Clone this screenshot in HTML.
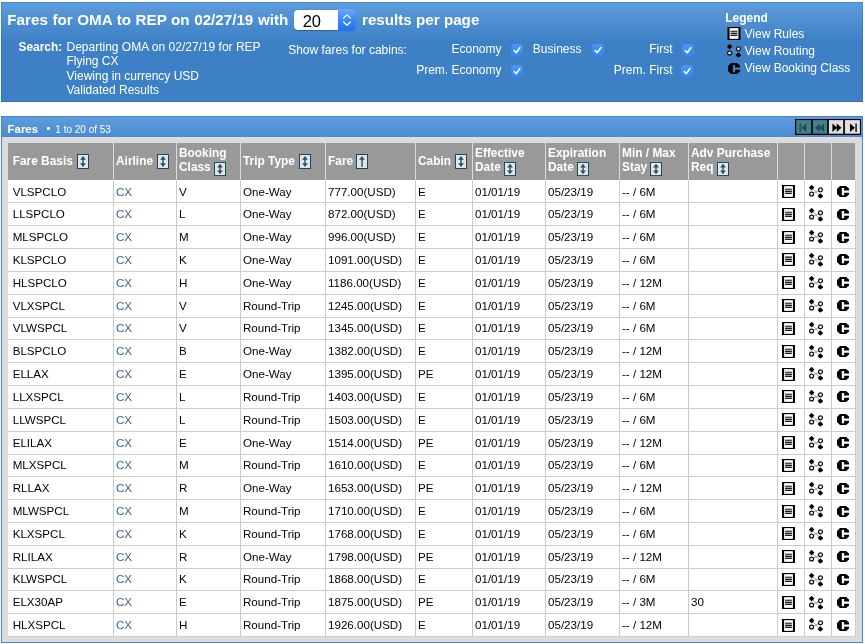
<!DOCTYPE html>
<html><head><meta charset="utf-8"><title>Fares</title>
<style>
html,body{margin:0;padding:0;background:#fff;}
body{width:865px;height:644px;position:relative;overflow:hidden;font-family:"Liberation Sans",sans-serif;color:#000;}
.abs{position:absolute;white-space:nowrap;}
#p1{position:absolute;left:1px;top:2px;width:860px;height:98px;border:1px solid rgba(0,60,150,0.2);background:#3d80c5 linear-gradient(#5e9ddd 0,#3d80c5 40px);background-origin:border-box;}
#p2{position:absolute;left:1px;top:116px;width:860px;height:524.6px;border:1px solid #4585cb;background:#dcdcdc;}
#p2h{position:absolute;left:0;top:0;width:860px;height:20px;background:linear-gradient(#5e9ddd 0,#4a8bd1 100%);}
.w{color:#fff;}
.t15{font-size:15.2px;font-weight:bold;line-height:18px;}
.t12{font-size:12px;line-height:14.3px;}
.b12{font-size:11.7px;font-weight:bold;line-height:14.3px;}
#sel{position:absolute;left:294px;top:10px;width:61px;height:20px;border-radius:4px;background:#fff;box-shadow:0 0.5px 1px rgba(0,0,0,.3);}
#sel .arr{position:absolute;left:44px;top:-1px;width:18px;height:22px;border-radius:0 4.5px 4.5px 0;background:linear-gradient(#6aa9fb,#3e8bf7 45%,#1f6ff2);overflow:hidden;}
#sel .v{position:absolute;left:8.7px;top:1.5px;font-size:16.5px;line-height:19px;color:#000;}
.cb{position:absolute;width:12px;height:12px;border-radius:3.5px;background:linear-gradient(#4896f9,#3383f5);}
.cb svg{position:absolute;left:0;top:0;width:12px;height:12px;}
.lab{position:absolute;text-align:right;white-space:nowrap;font-size:12px;line-height:14px;color:#fff;}
#grid{position:absolute;left:0;top:0;}
.hc{position:absolute;top:143px;height:37px;background:#999;box-sizing:border-box;}
.ht{position:absolute;color:#fff;font-weight:bold;font-size:11.9px;line-height:14.3px;white-space:nowrap;}
.ht.one{top:10.6px;}
.ht.two{top:3px;}
.si{width:12px;height:15px;vertical-align:-4px;margin-left:1px;}
.si.su{margin-left:0;}
.two .si{height:14px;vertical-align:-4.6px;margin-left:0;}
.row{position:absolute;left:8px;width:848px;background:#ccc;}
.c{position:absolute;top:0;bottom:1px;background:#fff;box-sizing:border-box;font-size:11.6px;line-height:14px;padding-top:5px;white-space:nowrap;}
.lk{color:#336699;}
.ic svg{position:absolute;overflow:visible;}
.i-rules{left:4px;top:5px;width:13px;height:13px;}
.i-route{left:4px;top:4.7px;width:14px;height:13.5px;}
.i-bkc{left:5px;top:6px;width:12px;height:11px;}
#wrap{position:absolute;left:0;top:0;width:865px;height:644px;will-change:transform;}
</style></head><body><div id="wrap">
<svg width="0" height="0" style="position:absolute">
<defs>
<symbol id="sortb" viewBox="0 0 12 15" preserveAspectRatio="none"><rect x="0.5" y="0.5" width="11" height="14" fill="#e3e3ee" stroke="#1c4a54" stroke-width="1"/><path d="M6 2L8.9 5.8H6.7V9.2H8.9L6 13L3.1 9.2H5.3V5.8H3.1Z" fill="#22545d"/></symbol>
<symbol id="sortu" viewBox="0 0 12 15" preserveAspectRatio="none"><rect x="0.5" y="0.5" width="11" height="14" fill="#e3e3ee" stroke="#1c4a54" stroke-width="1"/><path d="M6 2L8.9 5.8H6.8V12.9H5.3V5.8H3.1Z" fill="#2a5962"/></symbol>
<symbol id="rules" viewBox="0 0 13 13"><rect x="0" y="0" width="13" height="13" fill="#000"/><rect x="2.1" y="1.15" width="8.8" height="10.7" fill="#fff"/><rect x="3.1" y="3.5" width="6.8" height="5.6" fill="#d4d4d4"/><path d="M3.1 4.2h6.8M3.1 6.3h6.8M3.1 8.4h6.8" stroke="#1a1a1a" stroke-width="1.15"/></symbol>
<symbol id="route" viewBox="0 0 14 13.5"><path d="M2.5 2.5L11.5 11.2M11.5 4.8L2.5 9" stroke="#888" stroke-width="0.8" fill="none"/><path d="M2.6 -0.2L5.4 2.6L2.6 5.4L-0.2 2.6Z" fill="#000"/><path d="M11.4 8.3L14.2 11.1L11.4 13.9L8.6 11.1Z" fill="#000"/><circle cx="11.5" cy="4.8" r="1.95" fill="#fff" stroke="#111" stroke-width="1.25"/><circle cx="2.6" cy="9" r="1.95" fill="#fff" stroke="#111" stroke-width="1.25"/></symbol>
<symbol id="bkc" viewBox="0 0 12 11"><path d="M3,0 L9,0 L12,2.5 L12,4.6 L7.1,4.6 L7.1,2 L4.8,2 L4.8,9.2 L7.1,9.2 L7.1,6.7 L12,6.7 L12,8.5 L9,11 L3,11 L0,8 L0,3 Z" fill="#000"/></symbol>
<symbol id="chk" viewBox="0 0 12 12"><path d="M3.2 6.5L5.2 8.7L8.8 3.7" stroke="#fff" stroke-width="1.6" fill="none" stroke-linecap="round" stroke-linejoin="round"/></symbol>
</defs></svg>

<div id="p1"></div>
<div class="abs w t15" style="left:7.3px;top:11px;word-spacing:0.35px">Fares for OMA to REP on 02/27/19 with</div>
<div id="sel"><div class="v">20</div><div class="arr"><svg width="18" height="21" viewBox="0 0 18 21" style="position:absolute;left:0;top:1px"><path d="M5.6 8.1L9 4.9L12.4 8.1M5.6 12L9 15.2L12.4 12" stroke="#fff" stroke-width="1.3" fill="none" stroke-linecap="round" stroke-linejoin="round"/></svg></div></div>
<div class="abs w t15" style="left:362px;top:11px;">results per page</div>

<div class="abs w b12" style="left:18.5px;top:40px;font-size:11.9px">Search:</div>
<div class="abs w t12" style="left:66.5px;top:40px;">Departing OMA on 02/27/19 for REP<br>Flying CX<br>Viewing in currency USD<br>Validated Results</div>
<div class="abs w t12" style="left:288.2px;top:43px;">Show fares for cabins:</div>

<div class="lab" style="right:363.5px;top:42px;">Economy</div>
<div class="lab" style="right:363.5px;top:63px;">Prem. Economy</div>
<div class="lab" style="right:283.5px;top:42px;">Business</div>
<div class="lab" style="right:192.5px;top:42px;">First</div>
<div class="lab" style="right:192.5px;top:63px;">Prem. First</div>
<div class="cb" style="left:511px;top:44px;"><svg><use href="#chk"/></svg></div>
<div class="cb" style="left:511px;top:65px;"><svg><use href="#chk"/></svg></div>
<div class="cb" style="left:591.5px;top:44px;"><svg><use href="#chk"/></svg></div>
<div class="cb" style="left:682px;top:44px;"><svg><use href="#chk"/></svg></div>
<div class="cb" style="left:681px;top:65px;"><svg><use href="#chk"/></svg></div>

<div class="abs w b12" style="left:725.2px;top:11px;font-size:12px">Legend</div>
<svg class="abs" style="left:727px;top:27px;width:14px;height:13px"><use href="#rules"/></svg>
<svg class="abs" style="left:727px;top:44.2px;width:14px;height:13.5px;overflow:visible"><use href="#route"/></svg>
<svg class="abs" style="left:728px;top:63px;width:12px;height:11px"><use href="#bkc"/></svg>
<div class="abs w t12" style="left:744.5px;top:27px;">View Rules</div>
<div class="abs w t12" style="left:744.5px;top:44px;">View Routing</div>
<div class="abs w t12" style="left:744.5px;top:61px;">View Booking Class</div>

<div id="p2"><div id="p2h"></div></div>
<div class="abs w" style="left:7.6px;top:122px;font-size:11.4px;font-weight:bold;line-height:14px;">Fares</div>
<div class="abs" style="left:47px;top:127px;width:2.5px;height:2.5px;background:#fff;border-radius:1px;"></div>
<div class="abs w" style="left:55.3px;top:124px;font-size:10px;line-height:12px;">1 to 20 of 53</div>
<div class="abs" style="left:795px;top:119px;width:66px;height:16px;background:#000;"></div>
<svg class="abs" style="left:795px;top:119px;width:66px;height:16px" viewBox="0 0 66 16">
<rect x="1.2" y="1.1" width="15" height="13.6" fill="#47808c"/>
<rect x="17.8" y="1.1" width="14.4" height="13.6" fill="#47808c"/>
<rect x="33.9" y="1.1" width="14.3" height="13.6" fill="#e0e0e0"/>
<rect x="49.9" y="1.1" width="15" height="13.6" fill="#e0e0e0"/>
<path d="M4.5 4.5h1.6v8.5H4.5zM11.4 4.5v8.5L6.5 8.75z" fill="#1f4a52"/>
<path d="M24.7 4.5v8.5L20 8.75zM29.1 4.5v8.5L24.3 8.75z" fill="#1f4a52"/>
<path d="M37.4 4.5v8.5L42.1 8.75zM41.7 4.5v8.5L46.5 8.75z" fill="#000"/>
<path d="M55 4.5v8.5L59.9 8.75z" fill="#000"/><path d="M60.3 4.5h1.6v8.5h-1.6z" fill="#222"/>
</svg>

<div id="grid">
<div class="hc" style="left:8px;width:105px;padding-left:4.7px"><div class="ht one">Fare Basis <svg class="si"><use href="#sortb"/></svg></div></div>
<div class="hc" style="left:114px;width:62px;padding-left:2.0px"><div class="ht one">Airline <svg class="si"><use href="#sortb"/></svg></div></div>
<div class="hc" style="left:177px;width:63px;padding-left:2.0px"><div class="ht two">Booking<br>Class <svg class="si"><use href="#sortb"/></svg></div></div>
<div class="hc" style="left:241px;width:84px;padding-left:2.0px"><div class="ht one">Trip Type <svg class="si"><use href="#sortb"/></svg></div></div>
<div class="hc" style="left:326px;width:89px;padding-left:2.0px"><div class="ht one">Fare <svg class="si su"><use href="#sortu"/></svg></div></div>
<div class="hc" style="left:416px;width:56px;padding-left:2.0px"><div class="ht one">Cabin <svg class="si"><use href="#sortb"/></svg></div></div>
<div class="hc" style="left:473px;width:72px;padding-left:2.0px"><div class="ht two">Effective<br>Date <svg class="si"><use href="#sortb"/></svg></div></div>
<div class="hc" style="left:546px;width:73px;padding-left:2.0px"><div class="ht two">Expiration<br>Date <svg class="si"><use href="#sortb"/></svg></div></div>
<div class="hc" style="left:620px;width:68px;padding-left:2.0px"><div class="ht two">Min / Max<br>Stay <svg class="si"><use href="#sortb"/></svg></div></div>
<div class="hc" style="left:689px;width:88px;padding-left:2.0px"><div class="ht two">Adv Purchase<br>Req <svg class="si"><use href="#sortb"/></svg></div></div>
<div class="hc" style="left:778px;width:26px;padding-left:2.0px"></div>
<div class="hc" style="left:805px;width:26px;padding-left:2.0px"></div>
<div class="hc" style="left:832px;width:23px;padding-left:2.0px"></div>
<div class="row" style="top:180px;height:23px">
<div class="c" style="left:0px;width:105px;padding-left:4.7px;padding-top:5px">VLSPCLO</div>
<div class="c" style="left:106px;width:62px;padding-left:2.0px;padding-top:5px"><span class="lk">CX</span></div>
<div class="c" style="left:169px;width:63px;padding-left:2.0px;padding-top:5px">V</div>
<div class="c" style="left:233px;width:84px;padding-left:2.0px;padding-top:5px">One-Way</div>
<div class="c" style="left:318px;width:89px;padding-left:2.0px;padding-top:5px">777.00(USD)</div>
<div class="c" style="left:408px;width:56px;padding-left:2.0px;padding-top:5px">E</div>
<div class="c" style="left:465px;width:72px;padding-left:2.0px;padding-top:5px">01/01/19</div>
<div class="c" style="left:538px;width:73px;padding-left:2.0px;padding-top:5px">05/23/19</div>
<div class="c" style="left:612px;width:68px;padding-left:2.0px;padding-top:5px">-- / 6M</div>
<div class="c" style="left:681px;width:88px;padding-left:2.0px;padding-top:5px"></div>
<div class="c ic" style="left:770px;width:26px"><svg class="i-rules" style="top:5.00px"><use href="#rules"/></svg></div>
<div class="c ic" style="left:797px;width:26px"><svg class="i-route" style="top:4.80px"><use href="#route"/></svg></div>
<div class="c ic" style="left:824px;width:23px"><svg class="i-bkc" style="top:6.00px"><use href="#bkc"/></svg></div>
</div>
<div class="row" style="top:203px;height:23px">
<div class="c" style="left:0px;width:105px;padding-left:4.7px;padding-top:4px">LLSPCLO</div>
<div class="c" style="left:106px;width:62px;padding-left:2.0px;padding-top:4px"><span class="lk">CX</span></div>
<div class="c" style="left:169px;width:63px;padding-left:2.0px;padding-top:4px">L</div>
<div class="c" style="left:233px;width:84px;padding-left:2.0px;padding-top:4px">One-Way</div>
<div class="c" style="left:318px;width:89px;padding-left:2.0px;padding-top:4px">872.00(USD)</div>
<div class="c" style="left:408px;width:56px;padding-left:2.0px;padding-top:4px">E</div>
<div class="c" style="left:465px;width:72px;padding-left:2.0px;padding-top:4px">01/01/19</div>
<div class="c" style="left:538px;width:73px;padding-left:2.0px;padding-top:4px">05/23/19</div>
<div class="c" style="left:612px;width:68px;padding-left:2.0px;padding-top:4px">-- / 6M</div>
<div class="c" style="left:681px;width:88px;padding-left:2.0px;padding-top:4px"></div>
<div class="c ic" style="left:770px;width:26px"><svg class="i-rules" style="top:4.82px"><use href="#rules"/></svg></div>
<div class="c ic" style="left:797px;width:26px"><svg class="i-route" style="top:4.62px"><use href="#route"/></svg></div>
<div class="c ic" style="left:824px;width:23px"><svg class="i-bkc" style="top:5.82px"><use href="#bkc"/></svg></div>
</div>
<div class="row" style="top:226px;height:23px">
<div class="c" style="left:0px;width:105px;padding-left:4.7px;padding-top:4px">MLSPCLO</div>
<div class="c" style="left:106px;width:62px;padding-left:2.0px;padding-top:4px"><span class="lk">CX</span></div>
<div class="c" style="left:169px;width:63px;padding-left:2.0px;padding-top:4px">M</div>
<div class="c" style="left:233px;width:84px;padding-left:2.0px;padding-top:4px">One-Way</div>
<div class="c" style="left:318px;width:89px;padding-left:2.0px;padding-top:4px">996.00(USD)</div>
<div class="c" style="left:408px;width:56px;padding-left:2.0px;padding-top:4px">E</div>
<div class="c" style="left:465px;width:72px;padding-left:2.0px;padding-top:4px">01/01/19</div>
<div class="c" style="left:538px;width:73px;padding-left:2.0px;padding-top:4px">05/23/19</div>
<div class="c" style="left:612px;width:68px;padding-left:2.0px;padding-top:4px">-- / 6M</div>
<div class="c" style="left:681px;width:88px;padding-left:2.0px;padding-top:4px"></div>
<div class="c ic" style="left:770px;width:26px"><svg class="i-rules" style="top:4.65px"><use href="#rules"/></svg></div>
<div class="c ic" style="left:797px;width:26px"><svg class="i-route" style="top:4.45px"><use href="#route"/></svg></div>
<div class="c ic" style="left:824px;width:23px"><svg class="i-bkc" style="top:5.65px"><use href="#bkc"/></svg></div>
</div>
<div class="row" style="top:249px;height:23px">
<div class="c" style="left:0px;width:105px;padding-left:4.7px;padding-top:4px">KLSPCLO</div>
<div class="c" style="left:106px;width:62px;padding-left:2.0px;padding-top:4px"><span class="lk">CX</span></div>
<div class="c" style="left:169px;width:63px;padding-left:2.0px;padding-top:4px">K</div>
<div class="c" style="left:233px;width:84px;padding-left:2.0px;padding-top:4px">One-Way</div>
<div class="c" style="left:318px;width:89px;padding-left:2.0px;padding-top:4px">1091.00(USD)</div>
<div class="c" style="left:408px;width:56px;padding-left:2.0px;padding-top:4px">E</div>
<div class="c" style="left:465px;width:72px;padding-left:2.0px;padding-top:4px">01/01/19</div>
<div class="c" style="left:538px;width:73px;padding-left:2.0px;padding-top:4px">05/23/19</div>
<div class="c" style="left:612px;width:68px;padding-left:2.0px;padding-top:4px">-- / 6M</div>
<div class="c" style="left:681px;width:88px;padding-left:2.0px;padding-top:4px"></div>
<div class="c ic" style="left:770px;width:26px"><svg class="i-rules" style="top:4.47px"><use href="#rules"/></svg></div>
<div class="c ic" style="left:797px;width:26px"><svg class="i-route" style="top:4.27px"><use href="#route"/></svg></div>
<div class="c ic" style="left:824px;width:23px"><svg class="i-bkc" style="top:5.47px"><use href="#bkc"/></svg></div>
</div>
<div class="row" style="top:272px;height:23px">
<div class="c" style="left:0px;width:105px;padding-left:4.7px;padding-top:4px">HLSPCLO</div>
<div class="c" style="left:106px;width:62px;padding-left:2.0px;padding-top:4px"><span class="lk">CX</span></div>
<div class="c" style="left:169px;width:63px;padding-left:2.0px;padding-top:4px">H</div>
<div class="c" style="left:233px;width:84px;padding-left:2.0px;padding-top:4px">One-Way</div>
<div class="c" style="left:318px;width:89px;padding-left:2.0px;padding-top:4px">1186.00(USD)</div>
<div class="c" style="left:408px;width:56px;padding-left:2.0px;padding-top:4px">E</div>
<div class="c" style="left:465px;width:72px;padding-left:2.0px;padding-top:4px">01/01/19</div>
<div class="c" style="left:538px;width:73px;padding-left:2.0px;padding-top:4px">05/23/19</div>
<div class="c" style="left:612px;width:68px;padding-left:2.0px;padding-top:4px">-- / 12M</div>
<div class="c" style="left:681px;width:88px;padding-left:2.0px;padding-top:4px"></div>
<div class="c ic" style="left:770px;width:26px"><svg class="i-rules" style="top:4.30px"><use href="#rules"/></svg></div>
<div class="c ic" style="left:797px;width:26px"><svg class="i-route" style="top:4.10px"><use href="#route"/></svg></div>
<div class="c ic" style="left:824px;width:23px"><svg class="i-bkc" style="top:5.30px"><use href="#bkc"/></svg></div>
</div>
<div class="row" style="top:295px;height:23px">
<div class="c" style="left:0px;width:105px;padding-left:4.7px;padding-top:4px">VLXSPCL</div>
<div class="c" style="left:106px;width:62px;padding-left:2.0px;padding-top:4px"><span class="lk">CX</span></div>
<div class="c" style="left:169px;width:63px;padding-left:2.0px;padding-top:4px">V</div>
<div class="c" style="left:233px;width:84px;padding-left:2.0px;padding-top:4px">Round-Trip</div>
<div class="c" style="left:318px;width:89px;padding-left:2.0px;padding-top:4px">1245.00(USD)</div>
<div class="c" style="left:408px;width:56px;padding-left:2.0px;padding-top:4px">E</div>
<div class="c" style="left:465px;width:72px;padding-left:2.0px;padding-top:4px">01/01/19</div>
<div class="c" style="left:538px;width:73px;padding-left:2.0px;padding-top:4px">05/23/19</div>
<div class="c" style="left:612px;width:68px;padding-left:2.0px;padding-top:4px">-- / 6M</div>
<div class="c" style="left:681px;width:88px;padding-left:2.0px;padding-top:4px"></div>
<div class="c ic" style="left:770px;width:26px"><svg class="i-rules" style="top:4.13px"><use href="#rules"/></svg></div>
<div class="c ic" style="left:797px;width:26px"><svg class="i-route" style="top:3.93px"><use href="#route"/></svg></div>
<div class="c ic" style="left:824px;width:23px"><svg class="i-bkc" style="top:5.13px"><use href="#bkc"/></svg></div>
</div>
<div class="row" style="top:318px;height:22px">
<div class="c" style="left:0px;width:105px;padding-left:4.7px;padding-top:3px">VLWSPCL</div>
<div class="c" style="left:106px;width:62px;padding-left:2.0px;padding-top:3px"><span class="lk">CX</span></div>
<div class="c" style="left:169px;width:63px;padding-left:2.0px;padding-top:3px">V</div>
<div class="c" style="left:233px;width:84px;padding-left:2.0px;padding-top:3px">Round-Trip</div>
<div class="c" style="left:318px;width:89px;padding-left:2.0px;padding-top:3px">1345.00(USD)</div>
<div class="c" style="left:408px;width:56px;padding-left:2.0px;padding-top:3px">E</div>
<div class="c" style="left:465px;width:72px;padding-left:2.0px;padding-top:3px">01/01/19</div>
<div class="c" style="left:538px;width:73px;padding-left:2.0px;padding-top:3px">05/23/19</div>
<div class="c" style="left:612px;width:68px;padding-left:2.0px;padding-top:3px">-- / 6M</div>
<div class="c" style="left:681px;width:88px;padding-left:2.0px;padding-top:3px"></div>
<div class="c ic" style="left:770px;width:26px"><svg class="i-rules" style="top:3.95px"><use href="#rules"/></svg></div>
<div class="c ic" style="left:797px;width:26px"><svg class="i-route" style="top:3.75px"><use href="#route"/></svg></div>
<div class="c ic" style="left:824px;width:23px"><svg class="i-bkc" style="top:4.95px"><use href="#bkc"/></svg></div>
</div>
<div class="row" style="top:340px;height:23px">
<div class="c" style="left:0px;width:105px;padding-left:4.7px;padding-top:4px">BLSPCLO</div>
<div class="c" style="left:106px;width:62px;padding-left:2.0px;padding-top:4px"><span class="lk">CX</span></div>
<div class="c" style="left:169px;width:63px;padding-left:2.0px;padding-top:4px">B</div>
<div class="c" style="left:233px;width:84px;padding-left:2.0px;padding-top:4px">One-Way</div>
<div class="c" style="left:318px;width:89px;padding-left:2.0px;padding-top:4px">1382.00(USD)</div>
<div class="c" style="left:408px;width:56px;padding-left:2.0px;padding-top:4px">E</div>
<div class="c" style="left:465px;width:72px;padding-left:2.0px;padding-top:4px">01/01/19</div>
<div class="c" style="left:538px;width:73px;padding-left:2.0px;padding-top:4px">05/23/19</div>
<div class="c" style="left:612px;width:68px;padding-left:2.0px;padding-top:4px">-- / 12M</div>
<div class="c" style="left:681px;width:88px;padding-left:2.0px;padding-top:4px"></div>
<div class="c ic" style="left:770px;width:26px"><svg class="i-rules" style="top:4.78px"><use href="#rules"/></svg></div>
<div class="c ic" style="left:797px;width:26px"><svg class="i-route" style="top:4.58px"><use href="#route"/></svg></div>
<div class="c ic" style="left:824px;width:23px"><svg class="i-bkc" style="top:5.78px"><use href="#bkc"/></svg></div>
</div>
<div class="row" style="top:363px;height:23px">
<div class="c" style="left:0px;width:105px;padding-left:4.7px;padding-top:4px">ELLAX</div>
<div class="c" style="left:106px;width:62px;padding-left:2.0px;padding-top:4px"><span class="lk">CX</span></div>
<div class="c" style="left:169px;width:63px;padding-left:2.0px;padding-top:4px">E</div>
<div class="c" style="left:233px;width:84px;padding-left:2.0px;padding-top:4px">One-Way</div>
<div class="c" style="left:318px;width:89px;padding-left:2.0px;padding-top:4px">1395.00(USD)</div>
<div class="c" style="left:408px;width:56px;padding-left:2.0px;padding-top:4px">PE</div>
<div class="c" style="left:465px;width:72px;padding-left:2.0px;padding-top:4px">01/01/19</div>
<div class="c" style="left:538px;width:73px;padding-left:2.0px;padding-top:4px">05/23/19</div>
<div class="c" style="left:612px;width:68px;padding-left:2.0px;padding-top:4px">-- / 12M</div>
<div class="c" style="left:681px;width:88px;padding-left:2.0px;padding-top:4px"></div>
<div class="c ic" style="left:770px;width:26px"><svg class="i-rules" style="top:4.60px"><use href="#rules"/></svg></div>
<div class="c ic" style="left:797px;width:26px"><svg class="i-route" style="top:4.40px"><use href="#route"/></svg></div>
<div class="c ic" style="left:824px;width:23px"><svg class="i-bkc" style="top:5.60px"><use href="#bkc"/></svg></div>
</div>
<div class="row" style="top:386px;height:23px">
<div class="c" style="left:0px;width:105px;padding-left:4.7px;padding-top:4px">LLXSPCL</div>
<div class="c" style="left:106px;width:62px;padding-left:2.0px;padding-top:4px"><span class="lk">CX</span></div>
<div class="c" style="left:169px;width:63px;padding-left:2.0px;padding-top:4px">L</div>
<div class="c" style="left:233px;width:84px;padding-left:2.0px;padding-top:4px">Round-Trip</div>
<div class="c" style="left:318px;width:89px;padding-left:2.0px;padding-top:4px">1403.00(USD)</div>
<div class="c" style="left:408px;width:56px;padding-left:2.0px;padding-top:4px">E</div>
<div class="c" style="left:465px;width:72px;padding-left:2.0px;padding-top:4px">01/01/19</div>
<div class="c" style="left:538px;width:73px;padding-left:2.0px;padding-top:4px">05/23/19</div>
<div class="c" style="left:612px;width:68px;padding-left:2.0px;padding-top:4px">-- / 6M</div>
<div class="c" style="left:681px;width:88px;padding-left:2.0px;padding-top:4px"></div>
<div class="c ic" style="left:770px;width:26px"><svg class="i-rules" style="top:4.42px"><use href="#rules"/></svg></div>
<div class="c ic" style="left:797px;width:26px"><svg class="i-route" style="top:4.22px"><use href="#route"/></svg></div>
<div class="c ic" style="left:824px;width:23px"><svg class="i-bkc" style="top:5.42px"><use href="#bkc"/></svg></div>
</div>
<div class="row" style="top:409px;height:23px">
<div class="c" style="left:0px;width:105px;padding-left:4.7px;padding-top:4px">LLWSPCL</div>
<div class="c" style="left:106px;width:62px;padding-left:2.0px;padding-top:4px"><span class="lk">CX</span></div>
<div class="c" style="left:169px;width:63px;padding-left:2.0px;padding-top:4px">L</div>
<div class="c" style="left:233px;width:84px;padding-left:2.0px;padding-top:4px">Round-Trip</div>
<div class="c" style="left:318px;width:89px;padding-left:2.0px;padding-top:4px">1503.00(USD)</div>
<div class="c" style="left:408px;width:56px;padding-left:2.0px;padding-top:4px">E</div>
<div class="c" style="left:465px;width:72px;padding-left:2.0px;padding-top:4px">01/01/19</div>
<div class="c" style="left:538px;width:73px;padding-left:2.0px;padding-top:4px">05/23/19</div>
<div class="c" style="left:612px;width:68px;padding-left:2.0px;padding-top:4px">-- / 6M</div>
<div class="c" style="left:681px;width:88px;padding-left:2.0px;padding-top:4px"></div>
<div class="c ic" style="left:770px;width:26px"><svg class="i-rules" style="top:4.25px"><use href="#rules"/></svg></div>
<div class="c ic" style="left:797px;width:26px"><svg class="i-route" style="top:4.05px"><use href="#route"/></svg></div>
<div class="c ic" style="left:824px;width:23px"><svg class="i-bkc" style="top:5.25px"><use href="#bkc"/></svg></div>
</div>
<div class="row" style="top:432px;height:23px">
<div class="c" style="left:0px;width:105px;padding-left:4.7px;padding-top:4px">ELILAX</div>
<div class="c" style="left:106px;width:62px;padding-left:2.0px;padding-top:4px"><span class="lk">CX</span></div>
<div class="c" style="left:169px;width:63px;padding-left:2.0px;padding-top:4px">E</div>
<div class="c" style="left:233px;width:84px;padding-left:2.0px;padding-top:4px">One-Way</div>
<div class="c" style="left:318px;width:89px;padding-left:2.0px;padding-top:4px">1514.00(USD)</div>
<div class="c" style="left:408px;width:56px;padding-left:2.0px;padding-top:4px">PE</div>
<div class="c" style="left:465px;width:72px;padding-left:2.0px;padding-top:4px">01/01/19</div>
<div class="c" style="left:538px;width:73px;padding-left:2.0px;padding-top:4px">05/23/19</div>
<div class="c" style="left:612px;width:68px;padding-left:2.0px;padding-top:4px">-- / 12M</div>
<div class="c" style="left:681px;width:88px;padding-left:2.0px;padding-top:4px"></div>
<div class="c ic" style="left:770px;width:26px"><svg class="i-rules" style="top:4.07px"><use href="#rules"/></svg></div>
<div class="c ic" style="left:797px;width:26px"><svg class="i-route" style="top:3.87px"><use href="#route"/></svg></div>
<div class="c ic" style="left:824px;width:23px"><svg class="i-bkc" style="top:5.07px"><use href="#bkc"/></svg></div>
</div>
<div class="row" style="top:455px;height:22px">
<div class="c" style="left:0px;width:105px;padding-left:4.7px;padding-top:3px">MLXSPCL</div>
<div class="c" style="left:106px;width:62px;padding-left:2.0px;padding-top:3px"><span class="lk">CX</span></div>
<div class="c" style="left:169px;width:63px;padding-left:2.0px;padding-top:3px">M</div>
<div class="c" style="left:233px;width:84px;padding-left:2.0px;padding-top:3px">Round-Trip</div>
<div class="c" style="left:318px;width:89px;padding-left:2.0px;padding-top:3px">1610.00(USD)</div>
<div class="c" style="left:408px;width:56px;padding-left:2.0px;padding-top:3px">E</div>
<div class="c" style="left:465px;width:72px;padding-left:2.0px;padding-top:3px">01/01/19</div>
<div class="c" style="left:538px;width:73px;padding-left:2.0px;padding-top:3px">05/23/19</div>
<div class="c" style="left:612px;width:68px;padding-left:2.0px;padding-top:3px">-- / 6M</div>
<div class="c" style="left:681px;width:88px;padding-left:2.0px;padding-top:3px"></div>
<div class="c ic" style="left:770px;width:26px"><svg class="i-rules" style="top:3.90px"><use href="#rules"/></svg></div>
<div class="c ic" style="left:797px;width:26px"><svg class="i-route" style="top:3.70px"><use href="#route"/></svg></div>
<div class="c ic" style="left:824px;width:23px"><svg class="i-bkc" style="top:4.90px"><use href="#bkc"/></svg></div>
</div>
<div class="row" style="top:477px;height:23px">
<div class="c" style="left:0px;width:105px;padding-left:4.7px;padding-top:4px">RLLAX</div>
<div class="c" style="left:106px;width:62px;padding-left:2.0px;padding-top:4px"><span class="lk">CX</span></div>
<div class="c" style="left:169px;width:63px;padding-left:2.0px;padding-top:4px">R</div>
<div class="c" style="left:233px;width:84px;padding-left:2.0px;padding-top:4px">One-Way</div>
<div class="c" style="left:318px;width:89px;padding-left:2.0px;padding-top:4px">1653.00(USD)</div>
<div class="c" style="left:408px;width:56px;padding-left:2.0px;padding-top:4px">PE</div>
<div class="c" style="left:465px;width:72px;padding-left:2.0px;padding-top:4px">01/01/19</div>
<div class="c" style="left:538px;width:73px;padding-left:2.0px;padding-top:4px">05/23/19</div>
<div class="c" style="left:612px;width:68px;padding-left:2.0px;padding-top:4px">-- / 12M</div>
<div class="c" style="left:681px;width:88px;padding-left:2.0px;padding-top:4px"></div>
<div class="c ic" style="left:770px;width:26px"><svg class="i-rules" style="top:4.72px"><use href="#rules"/></svg></div>
<div class="c ic" style="left:797px;width:26px"><svg class="i-route" style="top:4.52px"><use href="#route"/></svg></div>
<div class="c ic" style="left:824px;width:23px"><svg class="i-bkc" style="top:5.72px"><use href="#bkc"/></svg></div>
</div>
<div class="row" style="top:500px;height:23px">
<div class="c" style="left:0px;width:105px;padding-left:4.7px;padding-top:4px">MLWSPCL</div>
<div class="c" style="left:106px;width:62px;padding-left:2.0px;padding-top:4px"><span class="lk">CX</span></div>
<div class="c" style="left:169px;width:63px;padding-left:2.0px;padding-top:4px">M</div>
<div class="c" style="left:233px;width:84px;padding-left:2.0px;padding-top:4px">Round-Trip</div>
<div class="c" style="left:318px;width:89px;padding-left:2.0px;padding-top:4px">1710.00(USD)</div>
<div class="c" style="left:408px;width:56px;padding-left:2.0px;padding-top:4px">E</div>
<div class="c" style="left:465px;width:72px;padding-left:2.0px;padding-top:4px">01/01/19</div>
<div class="c" style="left:538px;width:73px;padding-left:2.0px;padding-top:4px">05/23/19</div>
<div class="c" style="left:612px;width:68px;padding-left:2.0px;padding-top:4px">-- / 6M</div>
<div class="c" style="left:681px;width:88px;padding-left:2.0px;padding-top:4px"></div>
<div class="c ic" style="left:770px;width:26px"><svg class="i-rules" style="top:4.55px"><use href="#rules"/></svg></div>
<div class="c ic" style="left:797px;width:26px"><svg class="i-route" style="top:4.35px"><use href="#route"/></svg></div>
<div class="c ic" style="left:824px;width:23px"><svg class="i-bkc" style="top:5.55px"><use href="#bkc"/></svg></div>
</div>
<div class="row" style="top:523px;height:23px">
<div class="c" style="left:0px;width:105px;padding-left:4.7px;padding-top:4px">KLXSPCL</div>
<div class="c" style="left:106px;width:62px;padding-left:2.0px;padding-top:4px"><span class="lk">CX</span></div>
<div class="c" style="left:169px;width:63px;padding-left:2.0px;padding-top:4px">K</div>
<div class="c" style="left:233px;width:84px;padding-left:2.0px;padding-top:4px">Round-Trip</div>
<div class="c" style="left:318px;width:89px;padding-left:2.0px;padding-top:4px">1768.00(USD)</div>
<div class="c" style="left:408px;width:56px;padding-left:2.0px;padding-top:4px">E</div>
<div class="c" style="left:465px;width:72px;padding-left:2.0px;padding-top:4px">01/01/19</div>
<div class="c" style="left:538px;width:73px;padding-left:2.0px;padding-top:4px">05/23/19</div>
<div class="c" style="left:612px;width:68px;padding-left:2.0px;padding-top:4px">-- / 6M</div>
<div class="c" style="left:681px;width:88px;padding-left:2.0px;padding-top:4px"></div>
<div class="c ic" style="left:770px;width:26px"><svg class="i-rules" style="top:4.38px"><use href="#rules"/></svg></div>
<div class="c ic" style="left:797px;width:26px"><svg class="i-route" style="top:4.18px"><use href="#route"/></svg></div>
<div class="c ic" style="left:824px;width:23px"><svg class="i-bkc" style="top:5.38px"><use href="#bkc"/></svg></div>
</div>
<div class="row" style="top:546px;height:23px">
<div class="c" style="left:0px;width:105px;padding-left:4.7px;padding-top:4px">RLILAX</div>
<div class="c" style="left:106px;width:62px;padding-left:2.0px;padding-top:4px"><span class="lk">CX</span></div>
<div class="c" style="left:169px;width:63px;padding-left:2.0px;padding-top:4px">R</div>
<div class="c" style="left:233px;width:84px;padding-left:2.0px;padding-top:4px">One-Way</div>
<div class="c" style="left:318px;width:89px;padding-left:2.0px;padding-top:4px">1798.00(USD)</div>
<div class="c" style="left:408px;width:56px;padding-left:2.0px;padding-top:4px">PE</div>
<div class="c" style="left:465px;width:72px;padding-left:2.0px;padding-top:4px">01/01/19</div>
<div class="c" style="left:538px;width:73px;padding-left:2.0px;padding-top:4px">05/23/19</div>
<div class="c" style="left:612px;width:68px;padding-left:2.0px;padding-top:4px">-- / 12M</div>
<div class="c" style="left:681px;width:88px;padding-left:2.0px;padding-top:4px"></div>
<div class="c ic" style="left:770px;width:26px"><svg class="i-rules" style="top:4.20px"><use href="#rules"/></svg></div>
<div class="c ic" style="left:797px;width:26px"><svg class="i-route" style="top:4.00px"><use href="#route"/></svg></div>
<div class="c ic" style="left:824px;width:23px"><svg class="i-bkc" style="top:5.20px"><use href="#bkc"/></svg></div>
</div>
<div class="row" style="top:569px;height:22px">
<div class="c" style="left:0px;width:105px;padding-left:4.7px;padding-top:3px">KLWSPCL</div>
<div class="c" style="left:106px;width:62px;padding-left:2.0px;padding-top:3px"><span class="lk">CX</span></div>
<div class="c" style="left:169px;width:63px;padding-left:2.0px;padding-top:3px">K</div>
<div class="c" style="left:233px;width:84px;padding-left:2.0px;padding-top:3px">Round-Trip</div>
<div class="c" style="left:318px;width:89px;padding-left:2.0px;padding-top:3px">1868.00(USD)</div>
<div class="c" style="left:408px;width:56px;padding-left:2.0px;padding-top:3px">E</div>
<div class="c" style="left:465px;width:72px;padding-left:2.0px;padding-top:3px">01/01/19</div>
<div class="c" style="left:538px;width:73px;padding-left:2.0px;padding-top:3px">05/23/19</div>
<div class="c" style="left:612px;width:68px;padding-left:2.0px;padding-top:3px">-- / 6M</div>
<div class="c" style="left:681px;width:88px;padding-left:2.0px;padding-top:3px"></div>
<div class="c ic" style="left:770px;width:26px"><svg class="i-rules" style="top:4.03px"><use href="#rules"/></svg></div>
<div class="c ic" style="left:797px;width:26px"><svg class="i-route" style="top:3.83px"><use href="#route"/></svg></div>
<div class="c ic" style="left:824px;width:23px"><svg class="i-bkc" style="top:5.03px"><use href="#bkc"/></svg></div>
</div>
<div class="row" style="top:591px;height:23px">
<div class="c" style="left:0px;width:105px;padding-left:4.7px;padding-top:4px">ELX30AP</div>
<div class="c" style="left:106px;width:62px;padding-left:2.0px;padding-top:4px"><span class="lk">CX</span></div>
<div class="c" style="left:169px;width:63px;padding-left:2.0px;padding-top:4px">E</div>
<div class="c" style="left:233px;width:84px;padding-left:2.0px;padding-top:4px">Round-Trip</div>
<div class="c" style="left:318px;width:89px;padding-left:2.0px;padding-top:4px">1875.00(USD)</div>
<div class="c" style="left:408px;width:56px;padding-left:2.0px;padding-top:4px">PE</div>
<div class="c" style="left:465px;width:72px;padding-left:2.0px;padding-top:4px">01/01/19</div>
<div class="c" style="left:538px;width:73px;padding-left:2.0px;padding-top:4px">05/23/19</div>
<div class="c" style="left:612px;width:68px;padding-left:2.0px;padding-top:4px">-- / 3M</div>
<div class="c" style="left:681px;width:88px;padding-left:2.0px;padding-top:4px">30</div>
<div class="c ic" style="left:770px;width:26px"><svg class="i-rules" style="top:4.85px"><use href="#rules"/></svg></div>
<div class="c ic" style="left:797px;width:26px"><svg class="i-route" style="top:4.65px"><use href="#route"/></svg></div>
<div class="c ic" style="left:824px;width:23px"><svg class="i-bkc" style="top:5.85px"><use href="#bkc"/></svg></div>
</div>
<div class="row" style="top:614px;height:23px">
<div class="c" style="left:0px;width:105px;padding-left:4.7px;padding-top:4px">HLXSPCL</div>
<div class="c" style="left:106px;width:62px;padding-left:2.0px;padding-top:4px"><span class="lk">CX</span></div>
<div class="c" style="left:169px;width:63px;padding-left:2.0px;padding-top:4px">H</div>
<div class="c" style="left:233px;width:84px;padding-left:2.0px;padding-top:4px">Round-Trip</div>
<div class="c" style="left:318px;width:89px;padding-left:2.0px;padding-top:4px">1926.00(USD)</div>
<div class="c" style="left:408px;width:56px;padding-left:2.0px;padding-top:4px">E</div>
<div class="c" style="left:465px;width:72px;padding-left:2.0px;padding-top:4px">01/01/19</div>
<div class="c" style="left:538px;width:73px;padding-left:2.0px;padding-top:4px">05/23/19</div>
<div class="c" style="left:612px;width:68px;padding-left:2.0px;padding-top:4px">-- / 12M</div>
<div class="c" style="left:681px;width:88px;padding-left:2.0px;padding-top:4px"></div>
<div class="c ic" style="left:770px;width:26px"><svg class="i-rules" style="top:4.67px"><use href="#rules"/></svg></div>
<div class="c ic" style="left:797px;width:26px"><svg class="i-route" style="top:4.47px"><use href="#route"/></svg></div>
<div class="c ic" style="left:824px;width:23px"><svg class="i-bkc" style="top:5.67px"><use href="#bkc"/></svg></div>
</div>
</div>
</div></body></html>
